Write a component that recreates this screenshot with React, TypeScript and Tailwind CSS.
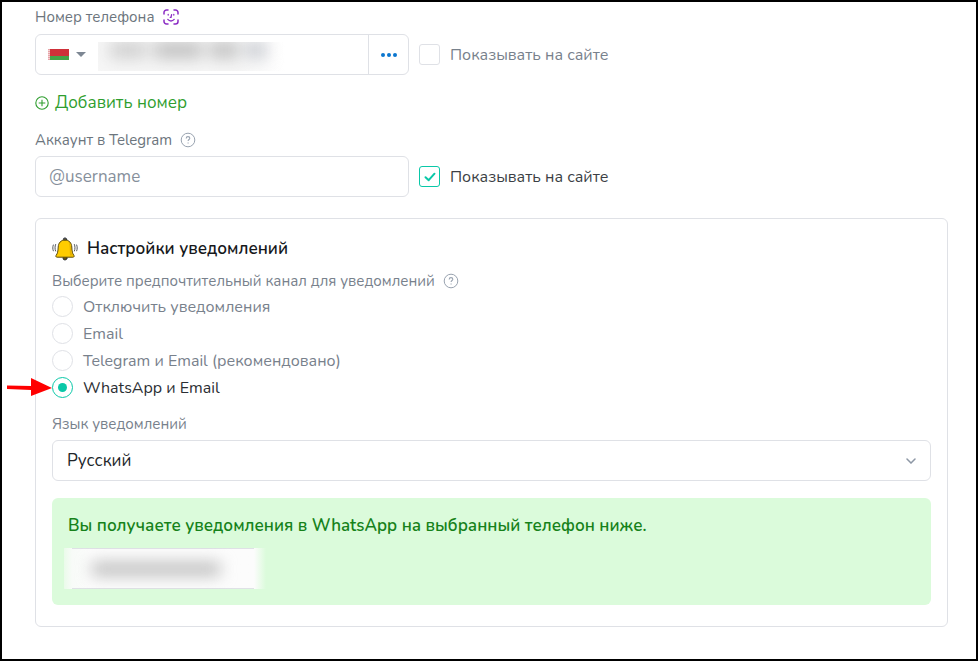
import { useState } from "react";

const channels = [
  "Отключить уведомления",
  "Email",
  "Telegram и Email (рекомендовано)",
  "WhatsApp и Email",
];

function HelpIcon() {
  return (
    <svg className="size-4 text-[#99a3b0]" viewBox="0 0 16 16" fill="none" stroke="currentColor" aria-hidden="true">
      <circle cx="8" cy="8" r="6.8" />
      <path d="M6.2 6.4C6.2 5.2 7 4.6 8 4.6s1.8.7 1.8 1.6c0 1.2-1.7 1.4-1.7 2.8M8.1 10.5v1.1" strokeWidth="1.1" />
    </svg>
  );
}

function FaceIcon() {
  return (
    <svg className="size-4 text-[#8b2cc4]" viewBox="0 0 16 16" fill="none" stroke="currentColor" strokeWidth="1.2" strokeLinecap="round" aria-hidden="true">
      <path d="M1 5V3.500A2.500 2.500 0 0 1 3.500 1H5M11 1h1.500A2.500 2.500 0 0 1 15 3.500V5M15 11v1.500a2.500 2.500 0 0 1-2.500 2.500H11M5 15H3.500A2.500 2.500 0 0 1 1 12.500V11" strokeWidth="1.5" />
      <path d="M5.200 5.400v.6M10.800 5.400v.6M8.600 5.600 8 8.400h-.7M4.800 10.400c1.800 2.100 4.600 2.100 6.400 0" strokeWidth="1.300" />
    </svg>
  );
}

function BellIcon() {
  return (
    <svg className="h-6 w-[26px]" viewBox="0 0 26 24" fill="none" strokeLinecap="round" strokeLinejoin="round" aria-hidden="true">
      <circle cx="13" cy="21" r="2" fill="#6b5200" stroke="#2d3036" />
      <circle cx="13" cy="2.6" r="1.7" fill="#5b5e66" stroke="#2d3036" />
      <path d="M13 3C8.6 3 6.4 6.2 6.2 10c-.2 4.600-.7 6.500-2 8.200-.7 1-.3 2 .9 2h15.800c1.200 0 1.600-1 .9-2-1.300-1.700-1.800-3.600-2-8.200C19.600 6.200 17.400 3 13 3Z" fill="#fc0" stroke="#5a4a10" />
      <path d="M16.500 5c1.600 2.500 1.200 8 1.500 13.500h3c-1.700-2-2-5-2.200-8.500-.1-2.300-1-4-2.300-5Z" fill="#e5b000" />
      <path d="M3.600 7.500c-.8 2-.8 4.500 0 6.500M1.300 8c-.7 1.900-.7 4 0 5.800M22.400 7.500c.8 2 .8 4.500 0 6.500M24.700 8c.7 1.900.7 4 0 5.800" stroke="#54585f" />
    </svg>
  );
}

function SiteCheckbox({ defaultChecked = false }: { defaultChecked?: boolean }) {
  return (
    <label className="flex items-center gap-[10px] text-[#78818c] has-checked:text-[#3c3f45]">
      <span className="grid size-[21px] place-items-center">
        <input
          type="checkbox"
          defaultChecked={defaultChecked}
          className="peer col-start-1 row-start-1 size-[21px] appearance-none rounded-[3px] border border-[#dfe1e6] bg-white checked:border-[#0ac8a8]"
        />
        <svg className="pointer-events-none invisible col-start-1 row-start-1 h-[10px] w-3 text-[#0ac8a8] peer-checked:visible" viewBox="0 0 12 10" fill="none" stroke="currentColor" strokeWidth="2" strokeLinecap="round" strokeLinejoin="round" aria-hidden="true">
          <path d="M1.500 5.200 4.700 8.200 10.500 1.700" />
        </svg>
      </span>
      Показывать на сайте
    </label>
  );
}

export default function App() {
  const [channel, setChannel] = useState(3);
  return (
    <main className="min-h-screen border-2 border-black bg-white pt-[3px] pr-7 pl-[33px] font-[Nunito,'Open_Sans','Noto_Sans',sans-serif] text-base leading-6 text-[#212529]">
      <div className="flex h-6 items-center gap-2 text-[15px] text-[#6c757d]">
        <label htmlFor="phone">Номер телефона</label>
        <FaceIcon />
      </div>
      <div className="mt-[5px] flex items-center gap-[10px]">
        <div className="flex h-[41px] w-[374px] rounded-md border border-[#dfe1e6]">
          <button type="button" aria-label="Страна: Беларусь" className="flex items-center gap-[7px] pl-3">
            <svg className="h-[11px] w-[21px]" viewBox="0 0 21 11" aria-hidden="true">
              <path d="M0 0h21v7H0z" fill="#cf3039" />
              <path d="M0 7h21v4H0z" fill="#45a347" />
              <path d="M0 0h2v11H0z" fill="#f3d3d5" />
              <path d="M1 0v11" stroke="#cf3039" strokeOpacity="0.6" strokeDasharray="1 1" />
            </svg>
            <svg className="h-[5px] w-[10px]" viewBox="0 0 10 5" aria-hidden="true">
              <path d="M0 0h10L5 5z" fill="#7d8793" />
            </svg>
          </button>
          <div className="relative ml-3 min-w-0 flex-1">
            <input id="phone" type="tel" className="size-full outline-none" />
            <div className="pointer-events-none absolute top-[7px] left-0 h-[29px] w-[187px] overflow-hidden bg-linear-to-r from-[#f6f6f6] from-75% to-white" aria-hidden="true">
              <div className="flex h-4 gap-2 pl-3 blur-[8px]">
                <span className="w-9 bg-[#cdcdcd]" />
                <span className="w-12 bg-[#bebebe]" />
                <span className="w-7 bg-[#bebebe]" />
                <span className="w-5 bg-[#c6c9cf]" />
              </div>
            </div>
          </div>
          <button type="button" aria-label="Ещё" className="flex w-10 items-center justify-center border-l border-[#dfe1e6] text-[#0b76cf]">
            <svg className="h-1 w-[18px]" viewBox="0 0 18 4" fill="currentColor" aria-hidden="true">
              <circle cx="3" cy="2" r="2" />
              <circle cx="9" cy="2" r="2" />
              <circle cx="15" cy="2" r="2" />
            </svg>
          </button>
        </div>
        <SiteCheckbox />
      </div>

      <button type="button" className="mt-4 flex h-6 items-center gap-[6px] text-[17px] text-[#2f9e2f]">
        <svg className="size-[14px]" viewBox="0 0 14 14" fill="none" stroke="currentColor" strokeWidth="1.100" aria-hidden="true">
          <circle cx="7" cy="7" r="6.200" />
          <path d="M7 3.700v6.600M3.700 7h6.600" />
        </svg>
        Добавить номер
      </button>

      <div className="mt-[13px] flex h-6 items-center gap-2 text-[15px] text-[#6c757d]">
        <label htmlFor="telegram">Аккаунт в Telegram</label>
        <HelpIcon />
      </div>
      <div className="mt-1 flex items-center gap-[10px]">
        <input
          id="telegram"
          type="text"
          placeholder="@username"
          className="h-[41px] w-[374px] rounded-md border border-[#dfe1e6] px-[13px] text-[17px] outline-none placeholder:text-[#868f9b]"
        />
        <SiteCheckbox defaultChecked />
      </div>

      <section className="mt-[21px] mb-5 rounded-md border border-[#dfe1e6] px-4 pt-[18px] pb-[21px]">
        <h2 className="flex h-6 items-center gap-[9px] text-[17px] font-semibold text-[#16181b]">
          <BellIcon />
          Настройки уведомлений
        </h2>
        <fieldset className="mt-2">
          <legend className="flex h-6 items-center gap-2 text-[15px] text-[#78818c]">
            Выберите предпочтительный канал для уведомлений
            <HelpIcon />
          </legend>
          {channels.map((name, i) => (
            <label key={name} className="relative flex h-[27px] items-center gap-[10px] text-[#78818c] has-checked:text-[#2b2e33]">
              {i === 3 && (
                <svg className="pointer-events-none absolute top-1 -left-[45px] h-[18px] w-[45px]" viewBox="0 0 45 18" fill="#f00" aria-hidden="true">
                  <path d="M0 7.500 24 8V0l21 10-21 8v-6L0 11z" />
                </svg>
              )}
              <input
                type="radio"
                name="channel"
                checked={channel === i}
                onChange={() => setChannel(i)}
                className="grid size-[21px] appearance-none place-items-center rounded-full border border-[#dfe1e6] bg-white before:size-[9px] before:rounded-full checked:border-[#0ac8a8] checked:before:bg-[#0ac8a8]"
              />
              {name}
            </label>
          ))}
        </fieldset>

        <label htmlFor="language" className="mt-[11px] flex h-6 items-center text-[15px] text-[#78818c]">
          Язык уведомлений
        </label>
        <div className="mt-1 grid items-center">
          <select id="language" className="col-start-1 row-start-1 h-[41px] w-full appearance-none rounded-md border border-[#dfe1e6] bg-white px-[14px] text-[17px] outline-none">
            <option>Русский</option>
          </select>
          <svg className="pointer-events-none col-start-1 row-start-1 mr-[15px] h-[6px] w-[10px] justify-self-end text-[#8d97a5]" viewBox="0 0 10 6" fill="none" stroke="currentColor" strokeWidth="1.500" strokeLinecap="round" aria-hidden="true">
            <path d="m1 1 4 4 4-4" />
          </svg>
        </div>

        <div className="mt-[17px] rounded-md bg-[#dbfbdb] px-4 pt-4 pb-4">
          <p className="text-[17px] font-semibold text-[#16821a]">Вы получаете уведомления в WhatsApp на выбранный телефон ниже.</p>
          <div className="mt-[10px] -ml-1 flex h-[41px] w-[202px] overflow-hidden" aria-hidden="true">
            <div className="w-2 bg-linear-to-r from-[#eafbea] to-[#f8fbf8]" />
            <div className="flex flex-1 items-center border-y border-[#dfe1e6] bg-linear-to-r from-[#f8fbf8] to-[#fcfcfc] to-10% px-5">
              <div className="h-3 w-32 bg-[#b5b5b5] blur-[8px]" />
            </div>
            <div className="w-3 bg-linear-to-r from-[#fcfcfc] to-[#dbfbdb]" />
          </div>
        </div>
      </section>
    </main>
  );
}
